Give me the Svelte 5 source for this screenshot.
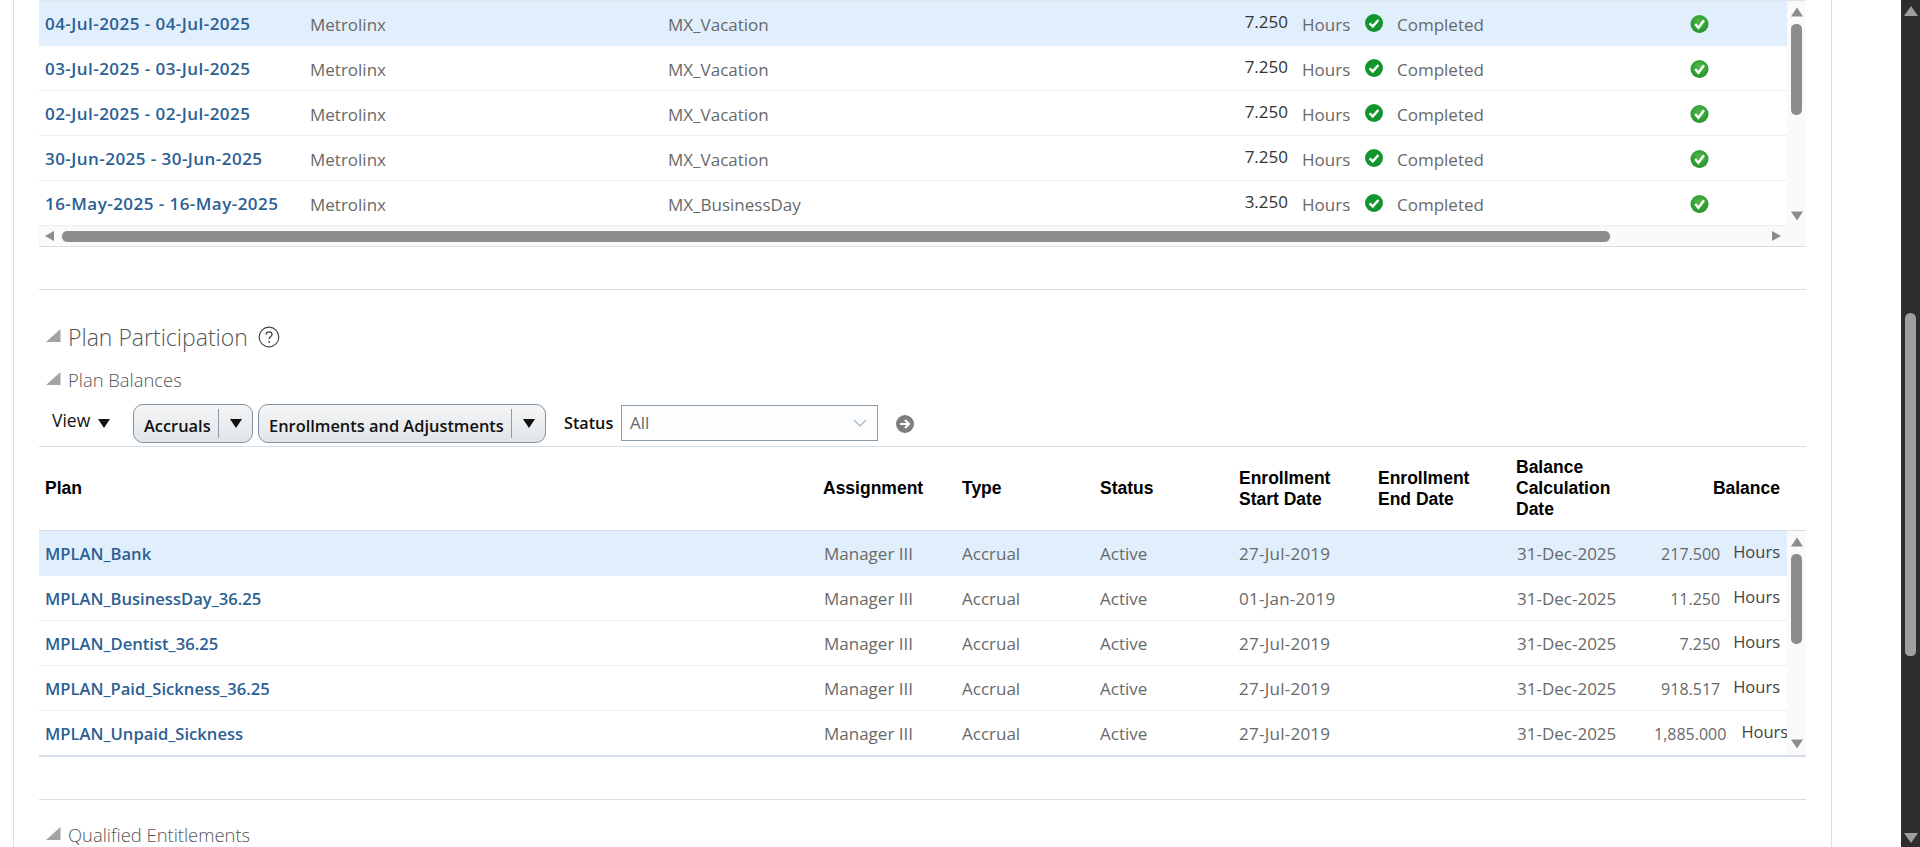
<script>
  const absences = [
    { dates: "04-Jul-2025 - 04-Jul-2025", type: "MX_Vacation", qty: "7.250" },
    { dates: "03-Jul-2025 - 03-Jul-2025", type: "MX_Vacation", qty: "7.250" },
    { dates: "02-Jul-2025 - 02-Jul-2025", type: "MX_Vacation", qty: "7.250" },
    { dates: "30-Jun-2025 - 30-Jun-2025", type: "MX_Vacation", qty: "7.250" },
    { dates: "16-May-2025 - 16-May-2025", type: "MX_BusinessDay", qty: "3.250" },
  ];

  const plans = [
    { name: "MPLAN_Bank", start: "27-Jul-2019", balance: "217.500" },
    { name: "MPLAN_BusinessDay_36.25", start: "01-Jan-2019", balance: "11.250" },
    { name: "MPLAN_Dentist_36.25", start: "27-Jul-2019", balance: "7.250" },
    { name: "MPLAN_Paid_Sickness_36.25", start: "27-Jul-2019", balance: "918.517" },
    { name: "MPLAN_Unpaid_Sickness", start: "27-Jul-2019", balance: "1,885.000", long: true },
  ];
</script>

{#snippet disclosure()}
  <svg class="disclosure" width="15" height="13" viewBox="0 0 15 13"><polygon points="14.5,0 14.5,13 0,13" fill="#a3a3a3" /></svg>
{/snippet}

{#snippet arrow(dir)}
  <svg class="arrow" width="12" height="10" viewBox="0 0 12 10">
    {#if dir === "up"}
      <polygon points="6,0.5 12,9.5 0,9.5" fill="#8c8c8c" />
    {:else if dir === "down"}
      <polygon points="0,0.5 12,0.5 6,9.5" fill="#8c8c8c" />
    {:else if dir === "left"}
      <polygon points="9,0 9,10 0,5" fill="#8c8c8c" />
    {:else}
      <polygon points="1,0 1,10 10,5" fill="#8c8c8c" />
    {/if}
  </svg>
{/snippet}

{#snippet vscroll(extra)}
  <div class="vscroll {extra}">
    {@render arrow("up")}
    <div class="vthumb"></div>
    {@render arrow("down")}
  </div>
{/snippet}

{#snippet caret()}
  <svg width="12" height="9" viewBox="0 0 12 9"><polygon points="0,0 12,0 6,9" fill="#111" /></svg>
{/snippet}

<div class="page">
  <main class="content">
    <section class="panel">
      <div class="table absences">
        <div class="rows">
          {#each absences as row, i}
            <div class="row abs-row" class:selected={i === 0}>
              <div class="cell link dates">{row.dates}</div>
              <div class="cell muted">Metrolinx</div>
              <div class="cell muted qty-cell">
                <span class="type">{row.type}</span>
                <span class="qty">{row.qty}</span>
                <span class="unit">Hours</span>
              </div>
              <div class="cell muted status-cell">
                <svg class="check" width="18" height="18" viewBox="0 0 18 18">
                  <circle cx="9" cy="9" r="9" fill="#12952f" />
                  <path d="M4.6 9.3 L7.8 12.4 L13.4 6" fill="none" stroke="#fff" stroke-width="2.4" />
                </svg>
                <span>Completed</span>
              </div>
              <div class="cell done-cell">
                <svg width="19" height="18" viewBox="0 0 19 18">
                  <defs>
                    <radialGradient id="glow" cx="50%" cy="40%" r="60%">
                      <stop offset="0%" stop-color="#57b84a" />
                      <stop offset="100%" stop-color="#21932a" />
                    </radialGradient>
                  </defs>
                  <circle cx="9.5" cy="9" r="9" fill="url(#glow)" />
                  <path d="M5.2 9 L8.4 12.8 L14 5.2" fill="none" stroke="#fff" stroke-width="2.4" />
                </svg>
              </div>
            </div>
          {/each}
        </div>
        {@render vscroll("top-scroll")}
        <div class="hscroll">
          {@render arrow("left")}
          <div class="hthumb"></div>
          {@render arrow("right")}
        </div>
      </div>

      <hr class="sep first-sep" />

      <h2 class="section-title">
        {@render disclosure()}
        <span>Plan Participation</span>
        <svg class="help" width="22" height="22" viewBox="0 0 21 21">
          <circle cx="10.5" cy="10.5" r="9.4" fill="none" stroke="#444" stroke-width="1.1" />
          <path d="M7.6 8.2 C7.7 6.4 9 5.5 10.5 5.5 C12.2 5.5 13.4 6.6 13.4 8 C13.4 9.9 10.6 10.2 10.6 12.6" fill="none" stroke="#444" stroke-width="1.2" />
          <circle cx="10.6" cy="15.2" r="0.9" fill="#444" />
        </svg>
      </h2>

      <h3 class="sub-title balances-title">
        {@render disclosure()}
        <span>Plan Balances</span>
      </h3>

      <div class="toolbar">
        <span class="view">View</span>
        <span class="view-caret">{@render caret()}</span>
        <div class="split accruals">
          <span class="split-label">Accruals</span>
          <span class="split-caret">{@render caret()}</span>
        </div>
        <div class="split enrollments">
          <span class="split-label">Enrollments and Adjustments</span>
          <span class="split-caret">{@render caret()}</span>
        </div>
        <span class="status-label">Status</span>
        <div class="select">
          <span class="select-value">All</span>
          <svg width="14" height="8" viewBox="0 0 14 8"><path d="M1 1 L7 7 L13 1" fill="none" stroke="#a9b3ba" stroke-width="1.2" /></svg>
        </div>
        <svg class="go" width="18" height="18" viewBox="0 0 18 18">
          <circle cx="9" cy="9" r="9" fill="#7d7d7d" />
          <path d="M4 9 H12 M9 5 L13 9 L9 13" fill="none" stroke="#fff" stroke-width="2.2" />
        </svg>
      </div>

      <div class="table balances">
        <div class="row plan-row head">
          <div class="cell">Plan</div>
          <div class="cell tight">Assignment</div>
          <div class="cell">Type</div>
          <div class="cell">Status</div>
          <div class="cell">Enrollment<br />Start Date</div>
          <div class="cell">Enrollment<br />End Date</div>
          <div class="cell tight">Balance<br />Calculation<br />Date</div>
          <div class="cell right">Balance</div>
        </div>
        <div class="head-gap"></div>
        <div class="rows">
          {#each plans as row, i}
            <div class="row plan-row" class:selected={i === 0}>
              <div class="cell link">{row.name}</div>
              <div class="cell muted">Manager III</div>
              <div class="cell muted">Accrual</div>
              <div class="cell muted">Active</div>
              <div class="cell muted date">{row.start}</div>
              <div class="cell muted"></div>
              <div class="cell muted">31-Dec-2025</div>
              <div class="cell muted bal-cell" class:long={row.long}>
                <span class="bal-num">{row.balance}</span>
                <span class="bal-unit">Hours</span>
              </div>
            </div>
          {/each}
        </div>
        {@render vscroll("plan-scroll")}
      </div>

      <hr class="sep last-sep" />

      <h3 class="sub-title entitlements">
        {@render disclosure()}
        <span>Qualified Entitlements</span>
      </h3>
    </section>
  </main>

  <div class="page-scroll">
    <svg width="14" height="10" viewBox="0 0 14 10"><polygon points="7,0 14,10 0,10" fill="#9f9f9f" /></svg>
    <div class="page-thumb"></div>
    <svg width="14" height="10" viewBox="0 0 14 10"><polygon points="0,0 14,0 7,10" fill="#9f9f9f" /></svg>
  </div>
</div>

<style>
  :global(body) {
    margin: 0;
    background: #fff;
    overflow: hidden;
  }

  .page {
    display: flex;
    width: 1920px;
    height: 847px;
    overflow: hidden;
    font-family: "Open Sans", "Liberation Sans", sans-serif;
    font-size: 17px;
    color: #666;
  }

  .content {
    width: 1901px;
    padding-left: 13px;
    box-sizing: border-box;
  }

  .panel {
    width: 1819px;
    height: 847px;
    box-sizing: border-box;
    padding-left: 25px;
    border-left: 1px solid #d6dfe8;
    border-right: 1px solid #d6dfe8;
    overflow: hidden;
  }

  .table {
    width: 1767px;
    display: grid;
    grid-template-columns: 1748px 19px;
  }

  .absences {
    border-top: 1px solid #dfe6ec;
    border-bottom: 1px solid #d6dfe8;
  }

  .balances {
    border-bottom: 2px solid #d6dfe8;
  }

  .row {
    display: grid;
    height: 45px;
    box-sizing: border-box;
    border-bottom: 1px solid #eeeeee;
  }

  .selected {
    background: #e1effd;
    border-bottom-color: #e1effd;
  }

  .abs-row {
    grid-template-columns: 262px 358px 697px 327px 104px;
  }

  .plan-row {
    grid-template-columns: 777px 138px 138px 139px 139px 139px 139px 139px;
  }

  .cell {
    display: flex;
    align-items: center;
    padding-left: 8px;
    min-width: 0;
    white-space: nowrap;
  }

  .link {
    color: #2b6094;
    font-weight: 600;
    font-size: 16.6px;
    padding-left: 6px;
    padding-top: 1px;
  }

  .dates {
    font-size: 17px;
    letter-spacing: 0.45px;
  }

  .muted {
    color: #696969;
    padding-top: 2px;
  }

  .plan-row .muted {
    padding-top: 1px;
  }

  .date {
    letter-spacing: 0.25px;
  }

  .abs-row .muted {
    padding-left: 9px;
  }

  .type {
    width: 575px;
  }

  .qty {
    width: 45px;
    text-align: right;
    color: #333;
    padding-bottom: 6px;
  }

  .unit {
    margin-left: 14px;
  }

  .abs-row .status-cell {
    padding-left: 9px;
    gap: 14px;
  }

  .check {
    margin-bottom: 2px;
  }

  .done-cell {
    padding-left: 7px;
    padding-top: 1px;
  }

  .vscroll {
    display: flex;
    flex-direction: column;
    align-items: center;
    background: #fafafa;
    box-sizing: border-box;
    padding-top: 6px;
  }

  .vthumb {
    width: 11px;
    background: #8c8c8c;
    border-radius: 5px;
    margin: 7px 0 auto;
  }

  .top-scroll .vthumb {
    height: 91px;
  }

  .top-scroll {
    padding-bottom: 5px;
  }

  .plan-scroll {
    grid-column: 2;
    grid-row: 3;
    padding-bottom: 6px;
  }

  .plan-scroll .vthumb {
    height: 90px;
  }

  .hscroll {
    grid-column: 1 / 3;
    height: 20px;
    display: flex;
    align-items: center;
    background: #fafafa;
    padding: 0 23px 0 6px;
  }

  .hthumb {
    width: 1548px;
    height: 11px;
    margin: 0 auto 0 5px;
    background: #8c8c8c;
    border-radius: 5px;
  }

  .sep {
    width: 1767px;
    margin: 0;
    border: 0;
    border-top: 1px solid #d6dfe8;
  }

  .first-sep {
    margin-top: 42px;
  }

  .section-title,
  .sub-title {
    display: flex;
    align-items: center;
    margin: 0;
    font-weight: 300;
    color: #555;
    padding-left: 7px;
  }

  .section-title {
    height: 40px;
    margin-top: 27px;
    font-size: 23px;
  }

  .sub-title {
    height: 26px;
    font-size: 18.4px;
  }

  .sub-title span {
    padding-bottom: 2px;
  }

  .balances-title {
    margin-top: 10px;
  }

  .disclosure {
    margin-right: 7px;
    margin-bottom: 3px;
    flex: none;
  }

  .help {
    margin-left: 10px;
  }

  .toolbar {
    display: flex;
    align-items: center;
    width: 1767px;
    height: 47px;
    box-sizing: border-box;
    border-bottom: 1px solid #d6dfe8;
    padding-left: 13px;
    margin-top: 7px;
    color: #111;
  }

  .view {
    width: 46px;
    padding-bottom: 6px;
    font-size: 17.5px;
  }

  .view-caret {
    display: flex;
    width: 35px;
  }

  .split {
    display: flex;
    align-items: stretch;
    height: 39px;
    box-sizing: border-box;
    border: 1px solid #7f93a3;
    border-radius: 10px;
    background: linear-gradient(#f5f6f7, #e1e5e8);
    font-weight: 600;
    font-size: 16.4px;
    margin-top: 1px;
  }

  .accruals {
    width: 120px;
    margin-right: 5px;
  }

  .enrollments {
    width: 288px;
    margin-right: 18px;
  }

  .split-label {
    flex: 1;
    display: flex;
    align-items: center;
    padding: 4px 0 0 10px;
    border-right: 1px solid #8b9ba8;
    margin: 4px 0;
    white-space: nowrap;
  }

  .split-caret {
    width: 33px;
    display: flex;
    align-items: center;
    justify-content: center;
  }

  .status-label {
    width: 57px;
    font-weight: 600;
    font-size: 16.2px;
  }

  .select {
    width: 257px;
    height: 36px;
    box-sizing: border-box;
    display: flex;
    align-items: center;
    justify-content: space-between;
    padding: 0 10px 0 8px;
    border: 1px solid #8b9ba8;
    background: #fcfdfe;
    color: #696969;
  }

  .select-value {
    padding-bottom: 2px;
  }

  .go {
    margin-left: 18px;
    margin-top: 2px;
  }

  .balances .head {
    grid-column: 1 / 3;
    height: 83px;
    border-bottom: 0;
    font-family: "Liberation Sans", Arial, sans-serif;
    font-weight: 700;
    font-size: 17.5px;
    line-height: 21px;
    color: #000;
  }

  .balances .head .tight {
    padding-left: 7px;
  }

  .balances .head .cell:first-child {
    padding-left: 6px;
  }

  .balances .head .right {
    justify-content: flex-end;
    padding-right: 7px;
  }

  .head-gap {
    grid-column: 1 / 3;
    border-top: 1px solid #d6dfe8;
  }

  .balances .rows {
    grid-column: 1;
    grid-row: 3;
  }

  .balances .rows .row:last-child {
    border-bottom: 0;
    height: 44px;
  }

  .bal-cell {
    justify-content: flex-end;
    gap: 13px;
    padding-right: 7px;
    overflow: hidden;
  }

  .bal-cell.long {
    padding-right: 0;
    justify-content: flex-start;
    padding-left: 6px;
    gap: 15px;
  }

  .bal-num {
    font-size: 16px;
  }

  .bal-unit {
    color: #444;
    font-size: 16.5px;
    padding-bottom: 4px;
  }

  .last-sep {
    margin-top: 42px;
  }

  .entitlements {
    margin-top: 22px;
  }

  .page-scroll {
    width: 19px;
    height: 847px;
    background: #2e2e2e;
    position: relative;
  }

  .page-scroll svg {
    position: absolute;
    left: 3px;
    top: 6px;
  }

  .page-scroll svg:last-child {
    top: 833px;
  }

  .page-thumb {
    position: absolute;
    left: 4px;
    top: 313px;
    width: 11px;
    height: 343px;
    border-radius: 6px 6px 5px 5px;
    background: #9f9f9f;
  }
</style>
